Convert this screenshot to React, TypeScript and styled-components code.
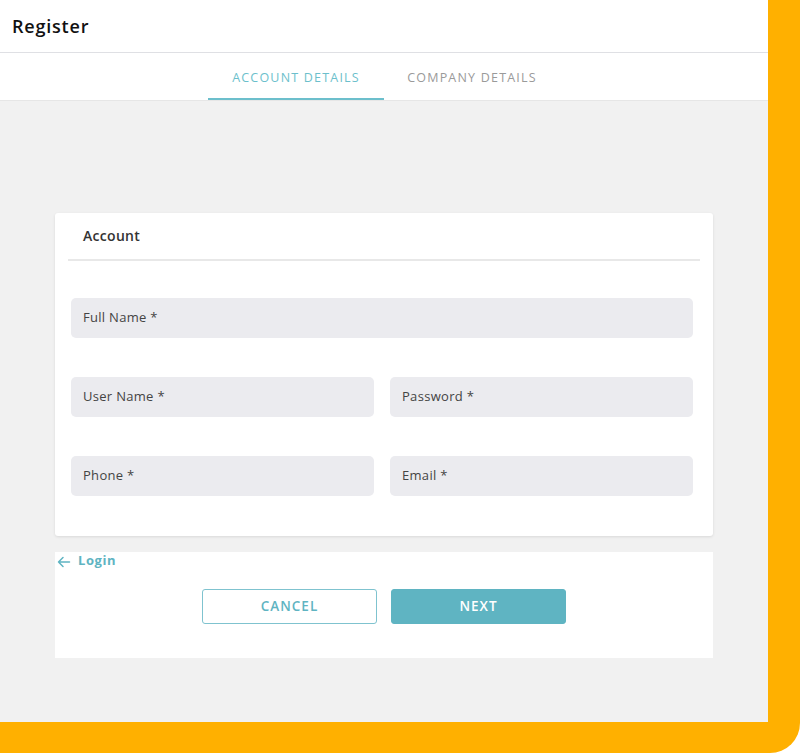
import React from "react";
import styled, { createGlobalStyle } from "styled-components";

const GlobalStyle = createGlobalStyle`
  html, body {
    margin: 0;
    padding: 0;
    background: #fff;
  }
  body {
    font-family: "Open Sans", "Liberation Sans", sans-serif;
  }
`;

const teal = "#5fb4c2";

const Frame = styled("div")`
  width: 800px;
  height: 753px;
  background: #ffb000;
  border-bottom-right-radius: 30px;
  overflow: hidden;
`;

const Screen = styled("div")`
  width: 768px;
  height: 722px;
  background: #f1f1f1;
  display: flex;
  flex-direction: column;
`;

const Header = styled("header")`
  height: 53px;
  background: #fff;
  border-bottom: 1px solid #dfe0e4;
  display: flex;
  align-items: center;
  padding: 0 12px 1px;
  box-sizing: border-box;
  h1 {
    margin: 0;
    font-size: 18px;
    font-weight: 600;
    color: #111;
    letter-spacing: 0.8px;
  }
`;

const Tabs = styled("nav")`
  height: 48px;
  background: #fff;
  border-bottom: 1px solid #e6e6e6;
  display: flex;
  justify-content: center;
  box-sizing: border-box;
`;

const Tab = styled("div")<{ $active?: boolean }>`
  width: 176px;
  display: flex;
  align-items: center;
  justify-content: center;
  font-size: 12.5px;
  letter-spacing: 1.2px;
  color: ${({ $active }) => ($active ? "#6cbfcc" : "#9a9a9a")};
  border-bottom: 2px solid ${({ $active }) => ($active ? "#6cbfcc" : "transparent")};
  padding-top: 4px;
  box-sizing: border-box;
`;

const Body = styled("main")`
  flex: 1;
  padding: 112px 55px 0;
  display: flex;
  flex-direction: column;
  gap: 16px;
`;

const Card = styled("section")`
  background: #fff;
  border-radius: 3px;
  box-shadow: 0 1px 3px rgba(0, 0, 0, 0.1);
  padding: 0 13px 40px;
`;

const CardTitle = styled("div")`
  height: 48px;
  box-sizing: border-box;
  border-bottom: 2px solid #e8e8e8;
  display: flex;
  align-items: center;
  padding: 0 15px 2px;
  font-size: 14px;
  font-weight: 600;
  letter-spacing: 0.3px;
  color: #333;
`;

const Fields = styled("div")`
  display: grid;
  grid-template-columns: 1fr 1fr;
  column-gap: 16px;
  row-gap: 39px;
  padding: 37px 7px 0 3px;
`;

const Field = styled("div")<{ $wide?: boolean }>`
  grid-column: ${({ $wide }) => ($wide ? "1 / span 2" : "auto")};
  height: 40px;
  box-sizing: border-box;
  background: #ebebef;
  border-radius: 5px;
  display: flex;
  align-items: center;
  padding: 0 12px 3px;
  font-size: 13px;
  letter-spacing: 0.3px;
  color: #444;
`;

const Footer = styled("section")`
  background: #fff;
  height: 106px;
  display: flex;
  flex-direction: column;
`;

const BackLink = styled("a")`
  display: flex;
  align-items: center;
  gap: 7px;
  padding: 0 2px;
  height: 16px;
  color: ${teal};
  font-size: 13px;
  font-weight: 700;
  letter-spacing: 0.6px;
  text-decoration: none;
  svg {
    margin-top: 4px;
  }
`;

const Actions = styled("div")`
  display: flex;
  justify-content: center;
  gap: 14px;
  margin-top: 21px;
`;

const Button = styled("button")<{ $primary?: boolean }>`
  width: 175px;
  height: 35px;
  border-radius: 3px;
  border: 1px solid ${({ $primary }) => ($primary ? "#5fb4c2" : "#7fc3cf")};
  background: ${({ $primary }) => ($primary ? teal : "#fff")};
  color: ${({ $primary }) => ($primary ? "#fff" : teal)};
  font-family: inherit;
  font-size: 13.5px;
  font-weight: 600;
  letter-spacing: 1px;
  padding-bottom: 2px;
  cursor: pointer;
`;

function ArrowLeft() {
  return (
    <svg width="14" height="14" viewBox="0 0 14 14" fill="none" stroke={teal} strokeWidth="1.5" strokeLinecap="round" strokeLinejoin="round">
      <path d="M12.5 7H1.5M6 2.5L1.5 7 6 11.5" />
    </svg>
  );
}

export default function App() {
  return (
    <Frame>
      <GlobalStyle />
      <Screen>
        <Header>
          <h1>Register</h1>
        </Header>
        <Tabs>
          <Tab $active>ACCOUNT DETAILS</Tab>
          <Tab>COMPANY DETAILS</Tab>
        </Tabs>
        <Body>
          <Card>
            <CardTitle>Account</CardTitle>
            <Fields>
              <Field $wide>Full Name *</Field>
              <Field>User Name *</Field>
              <Field>Password *</Field>
              <Field>Phone *</Field>
              <Field>Email *</Field>
            </Fields>
          </Card>
          <Footer>
            <BackLink href="#">
              <ArrowLeft />
              Login
            </BackLink>
            <Actions>
              <Button>CANCEL</Button>
              <Button $primary>NEXT</Button>
            </Actions>
          </Footer>
        </Body>
      </Screen>
    </Frame>
  );
}
